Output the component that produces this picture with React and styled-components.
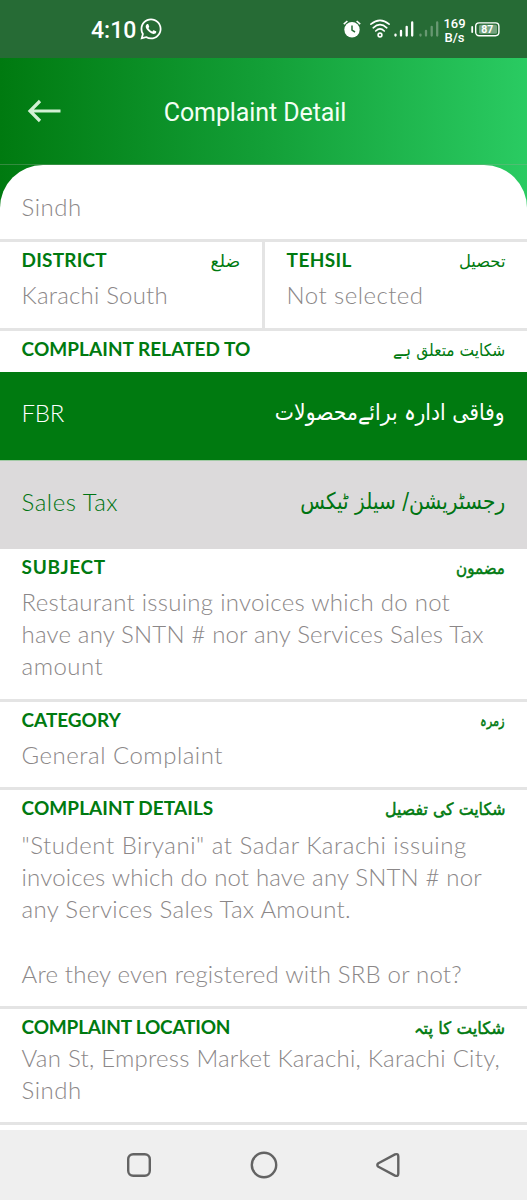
// Imports
import React from 'react';
import styled, { createGlobalStyle } from 'styled-components';
import { FaWhatsapp } from 'react-icons/fa';

// Styles
const GlobalStyle = createGlobalStyle`
  * {
    box-sizing: border-box;
  }

  body {
    margin: 0;
    background: #fff;
  }
`;

const Screen = styled.div`
  width: 527px;
  height: 1200px;
  display: flex;
  flex-direction: column;
  overflow: hidden;
  background: #fff;
  font-family: Lato, sans-serif;
`;

const StatusBar = styled.div`
  height: 58px;
  flex: none;
  display: flex;
  justify-content: space-between;
  align-items: center;
  padding: 0 27px 0 91px;
  background: #266b35;
  color: #fff;
  font-family: Roboto, sans-serif;
`;

const Clock = styled.div`
  display: flex;
  align-items: center;
  gap: 3px;
  font-size: 23px;
  font-weight: 500;
  line-height: 27px;
  padding-top: 2px;

  svg {
    font-size: 24px;
    margin-top: -2px;
  }
`;

const StatusIcons = styled.div`
  display: flex;
  align-items: center;
  height: 28px;

  svg {
    display: block;
  }
`;

const Gap = styled.div`
  width: ${props => props.$width}px;
`;

const Speed = styled.div`
  width: 23px;
  margin: 0 5px 0 4px;
  padding-top: 3px;
  font-size: 13px;
  font-weight: 500;
  line-height: 14px;
  text-align: center;
`;

const Backdrop = styled.div`
  height: 1072px;
  flex: none;
  display: flex;
  flex-direction: column;
  background: linear-gradient(90deg, #007a10 0%, #139f37 50%, #2acb62 100%);
`;

const Header = styled.div`
  height: 107px;
  flex: none;
  display: grid;
  grid-template-columns: 90px 1fr 107px;
  align-items: center;
  border-bottom: 1px solid rgba(150, 170, 150, .35);
`;

const BackButton = styled.div`
  padding-left: 27px;

  svg {
    display: block;
  }
`;

const Title = styled.div`
  color: #f4fff4;
  font-family: Roboto, sans-serif;
  font-size: 25px;
  letter-spacing: -.1px;
  line-height: 30px;
  text-align: center;
  white-space: nowrap;
  padding-top: 3px;
`;

const Sheet = styled.div`
  flex: 1;
  overflow: hidden;
  background: #fff;
  border-radius: 43px 43px 0 0;
`;

const Section = styled.div`
  height: ${props => props.$height}px;
  padding: ${props => props.$top || 0}px 22px 0 21.6px;
  border-bottom: ${props => (props.$plain ? 'none' : '3px solid #e4e4e4')};
`;

const Split = styled.div`
  display: grid;
  grid-template-columns: 265px 262px;
`;

const Half = styled(Section)`
  border-right: ${props => (props.$divider ? '3px solid #e4e4e4' : 'none')};
`;

const LabelRow = styled.div`
  display: flex;
  justify-content: space-between;
  height: 24px;
  color: #007a10;
`;

const Label = styled.div`
  font-size: 19px;
  font-weight: 700;
  line-height: 24px;
  letter-spacing: ${props => props.$track || 0}px;
  white-space: nowrap;
`;

const Urdu = styled.div`
  font-family: 'DejaVu Sans', sans-serif;
  font-size: ${props => props.$size || 17}px;
  line-height: 26px;
  white-space: nowrap;
  -webkit-text-stroke: ${props => (props.$heavy ? '.5px #007a10' : '0')};
  transform: scaleX(${props => props.$squeeze || 1});
  transform-origin: right center;
`;

const Value = styled.div`
  padding-top: ${props => props.$top || 0}px;
  color: #8b8788;
`;

const Line = styled.div`
  min-height: 32.2px;
  font-size: 24px;
  font-weight: 300;
  line-height: 32.2px;
  letter-spacing: ${props => props.$track || 0}px;
  white-space: pre;
`;

const Option = styled.div`
  height: ${props => props.$height}px;
  display: flex;
  justify-content: space-between;
  align-items: center;
  padding: 0 22px 5px 21.6px;
  background: ${props => (props.$active ? '#007a10' : '#dcdadb')};
  color: ${props => (props.$active ? '#fff' : '#007412')};
  border-top: ${props => (props.$active ? 'none' : '1px solid #a3cba6')};

  ${Urdu} {
    padding-bottom: 4px;
  }
`;

const NavBar = styled.div`
  height: 70px;
  flex: none;
  display: flex;
  justify-content: space-between;
  align-items: center;
  padding: 0 126px 1px;
  background: #efefef;

  svg {
    display: block;
  }
`;

// Data
const subject = [
  { text: 'Restaurant issuing invoices which do not', track: 0.27 },
  { text: 'have any SNTN # nor any Services Sales Tax', track: 0.17 },
  { text: 'amount', track: 0.45 },
];

const details = [
  { text: '"Student Biryani" at Sadar Karachi issuing', track: 0.52 },
  { text: 'invoices which do not have any SNTN # nor', track: 0.16 },
  { text: 'any Services Sales Tax Amount.', track: 0.31 },
  { text: '' },
  { text: 'Are they even registered with SRB or not?', track: 0.19 },
];

const location = [
  { text: 'Van St, Empress Market Karachi, Karachi City,', track: 0.24 },
  { text: 'Sindh', track: 0.5 },
];

// Icons
const AlarmIcon = () => (
  <svg width="18" height="18" viewBox="0 0 18 18" fill="none">
    <circle cx="9" cy="9.7" r="7.7" fill="#fff" />
    <path d="M9 5.5v4.7l3 1.8" stroke="#266b35" strokeWidth="1.5" />
    <path d="M.8 4.2L4.4 1M17.2 4.2L13.6 1" stroke="#fff" strokeWidth="1.6" />
  </svg>
);

const WifiIcon = () => (
  <svg width="20" height="20" viewBox="0 0 20 20" fill="none" stroke="#fff" strokeWidth="1.6" strokeLinecap="round">
    <path d="M.9 5.2Q10-2.6 19.1 5.2M3.2 8.8Q10 2.6 16.8 8.8M5.7 12Q10 7.8 14.3 12" />
    <circle cx="10" cy="16" r="1.9" />
  </svg>
);

const SignalIcon = ({ opacity }) => (
  <svg width="20" height="16" viewBox="0 0 20 16" stroke="#fff" strokeWidth="2.3" strokeLinecap="round" opacity={opacity}>
    <path d="M1.5 13.6v.9M7 10v4.5M12.7 5.8v8.7M18.2 1.5v13" />
  </svg>
);

const BatteryIcon = () => (
  <svg width="29" height="15" viewBox="0 0 29 15">
    <path d="M1.2 5v5" stroke="#fff" strokeWidth="1.8" strokeLinecap="round" />
    <rect x="4.7" y=".9" width="23.2" height="12.8" rx="3.4" fill="none" stroke="#fff" strokeWidth="1.4" />
    <rect x="8" y="2.8" width="18" height="9" rx="1.5" fill="#76a380" />
    <text x="16.3" y="11.2" fill="#fff" fontFamily="Roboto, sans-serif" fontSize="10.5" fontWeight="700" textAnchor="middle">87</text>
  </svg>
);

const BackIcon = () => (
  <svg width="34" height="24" viewBox="0 0 34 24" fill="none" stroke="#d2f0d4" strokeWidth="3.2">
    <path d="M33.5 12H3M13 2L3 12l10 10" />
  </svg>
);

const Lines = ({ items, top }) => (
  <Value $top={top}>
    {items.map(item => (
      <Line key={item.text} $track={item.track}>{item.text}</Line>
    ))}
  </Value>
);

// Main
const App = () => (
  <>
    <GlobalStyle />
    <Screen>
      {/* Status bar */}
      <StatusBar>
        <Clock>
          <span>4:10</span>
          <FaWhatsapp />
        </Clock>
        <StatusIcons>
          <AlarmIcon />
          <Gap $width={9} />
          <WifiIcon />
          <Gap $width={4} />
          <SignalIcon opacity={1} />
          <Gap $width={5} />
          <SignalIcon opacity={0.3} />
          <Speed>169<br />B/s</Speed>
          <BatteryIcon />
        </StatusIcons>
      </StatusBar>

      <Backdrop>
        {/* Header */}
        <Header>
          <BackButton><BackIcon /></BackButton>
          <Title>Complaint Detail</Title>
        </Header>

        {/* Content */}
        <Sheet>
          <Section $height={77} $top={26}>
            <Lines items={[{ text: 'Sindh', track: 0.5 }]} />
          </Section>

          <Split>
            <Half $height={89} $top={6} $divider>
              <LabelRow>
                <Label $track={0.2}>DISTRICT</Label>
                <Urdu $squeeze={1.02}>ضلع</Urdu>
              </LabelRow>
              <Lines top={7} items={[{ text: 'Karachi South', track: 0.2 }]} />
            </Half>
            <Half $height={89} $top={6}>
              <LabelRow>
                <Label $track={0.4}>TEHSIL</Label>
                <Urdu $squeeze={0.96}>تحصیل</Urdu>
              </LabelRow>
              <Lines top={7} items={[{ text: 'Not selected', track: 0.45 }]} />
            </Half>
          </Split>

          <Section $height={41} $top={6} $plain>
            <LabelRow>
              <Label $track={0.04}>COMPLAINT RELATED TO</Label>
              <Urdu $squeeze={0.91}>شکایت متعلق ہے</Urdu>
            </LabelRow>
          </Section>
          <Option $height={88} $active>
            <Line $track={-0.3}>FBR</Line>
            <Urdu $size={23} $squeeze={0.885}>وفاقی ادارہ برائےمحصولات</Urdu>
          </Option>
          <Option $height={89}>
            <Line $track={0.5}>Sales Tax</Line>
            <Urdu $size={23} $squeeze={0.875}>رجسٹریشن/ سیلز ٹیکس</Urdu>
          </Option>

          <Section $height={153} $top={6}>
            <LabelRow>
              <Label $track={0.65}>SUBJECT</Label>
              <Urdu $squeeze={0.89} $heavy>مضمون</Urdu>
            </LabelRow>
            <Lines top={7} items={subject} />
          </Section>

          <Section $height={88} $top={6}>
            <LabelRow>
              <Label $track={-0.05}>CATEGORY</Label>
              <Urdu $size={15} $squeeze={0.76} $heavy>زمرہ</Urdu>
            </LabelRow>
            <Lines top={7} items={[{ text: 'General Complaint', track: 0.5 }]} />
          </Section>

          <Section $height={219} $top={6}>
            <LabelRow>
              <Label $track={0.06}>COMPLAINT DETAILS</Label>
              <Urdu $squeeze={0.93} $heavy>شکایت کی تفصیل</Urdu>
            </LabelRow>
            <Lines top={9} items={details} />
          </Section>

          <Section $height={116} $top={6}>
            <LabelRow>
              <Label $track={-0.2}>COMPLAINT LOCATION</Label>
              <Urdu $squeeze={0.97} $heavy>شکایت کا پتہ</Urdu>
            </LabelRow>
            <Lines top={3} items={location} />
          </Section>
        </Sheet>
      </Backdrop>

      {/* Navigation bar */}
      <NavBar>
        <svg width="26" height="26" viewBox="0 0 26 26" fill="none" stroke="#636363" strokeWidth="2.4">
          <rect x="2.2" y="2.2" width="21.6" height="21.6" rx="5" />
        </svg>
        <svg width="28" height="28" viewBox="0 0 28 28" fill="none" stroke="#636363" strokeWidth="2.4">
          <circle cx="14" cy="14" r="12.2" />
        </svg>
        <svg width="26" height="26" viewBox="0 0 26 26" fill="none" stroke="#636363" strokeWidth="2.4" strokeLinejoin="round">
          <path d="M3.4 11.2L20 2.4Q23.3 1.2 23.3 4.6V21.4Q23.3 24.8 20 23.6L3.4 14.8Q1.2 13 3.4 11.2Z" />
        </svg>
      </NavBar>
    </Screen>
  </>
);

export default App;
